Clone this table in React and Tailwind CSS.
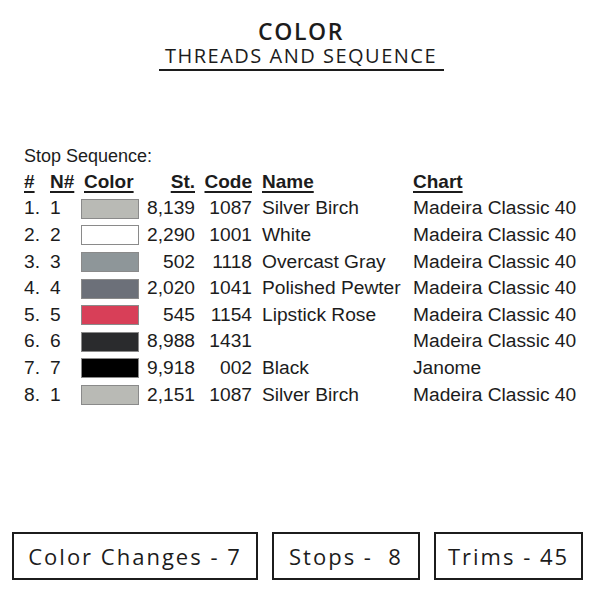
import React from "react";

const rows = [
  { n: "1.", k: "1", c: "#b9bab5", st: "8,139", code: "1087", name: "Silver Birch", chart: "Madeira Classic 40" },
  { n: "2.", k: "2", c: "#ffffff", st: "2,290", code: "1001", name: "White", chart: "Madeira Classic 40" },
  { n: "3.", k: "3", c: "#8e9699", st: "502", code: "1118", name: "Overcast Gray", chart: "Madeira Classic 40" },
  { n: "4.", k: "4", c: "#6c7079", st: "2,020", code: "1041", name: "Polished Pewter", chart: "Madeira Classic 40" },
  { n: "5.", k: "5", c: "#d83f58", st: "545", code: "1154", name: "Lipstick Rose", chart: "Madeira Classic 40" },
  { n: "6.", k: "6", c: "#2a2b2d", st: "8,988", code: "1431", name: "", chart: "Madeira Classic 40" },
  { n: "7.", k: "7", c: "#000000", st: "9,918", code: "002", name: "Black", chart: "Janome" },
  { n: "8.", k: "1", c: "#b9bab5", st: "2,151", code: "1087", name: "Silver Birch", chart: "Madeira Classic 40" },
];

const U = "underline underline-offset-[3px] decoration-2";

export default function App() {
  return (
    <div className="w-[600px] h-[600px] bg-white flex flex-col text-[#1c1c1c] overflow-hidden">
      <div className="flex flex-col items-center pt-[17px]" style={{ fontFamily: '"Open Sans", sans-serif' }}>
        <div className="text-[23px] leading-[28px] font-semibold tracking-[1.6px] pl-[2px]">COLOR</div>
        <div className="w-[285px] border-b-2 border-[#1c1c1c] ml-[2px] pb-[2px]">
          <div className="text-center text-[20px] leading-[22px] tracking-[1.5px]">THREADS AND SEQUENCE</div>
        </div>
      </div>

      <div className="flex flex-col pl-[24px] mt-[72px]" style={{ fontFamily: '"Liberation Sans", Arial, sans-serif' }}>
        <div className="text-[18px] leading-[26px]">Stop Sequence:</div>
        <div className="flex items-center h-[26.5px] text-[19px] font-bold">
          <div className="w-[26px]"><span className={U}>#</span></div>
          <div className="w-[34px]"><span className={U}>N#</span></div>
          <div className="w-[55px]"><span className={U}>Color</span></div>
          <div className="w-[56px] text-right"><span className={U}>St.</span></div>
          <div className="w-[57px] text-right"><span className={U}>Code</span></div>
          <div className="w-[161px] pl-[10px]"><span className={U}>Name</span></div>
          <div><span className={U}>Chart</span></div>
        </div>
        {rows.map((r, i) => (
          <div key={i} className="flex items-center h-[26.6px] text-[19.2px] whitespace-nowrap">
            <div className="w-[26px]">{r.n}</div>
            <div className="w-[31px]">{r.k}</div>
            <div className="w-[58px] flex items-center">
              <div className="w-[58px] h-[20px] border border-[#8a8a8a]" style={{ backgroundColor: r.c }} />
            </div>
            <div className="w-[56px] text-right">{r.st}</div>
            <div className="w-[57px] text-right">{r.code}</div>
            <div className="w-[161px] pl-[10px]">{r.name}</div>
            <div>{r.chart}</div>
          </div>
        ))}
      </div>

      <div className="mt-auto mb-[20px] flex pl-[12px] gap-[14px]" style={{ fontFamily: '"Open Sans", sans-serif' }}>
        <div className="w-[246px] h-[48px] border-2 border-[#1c1c1c] flex items-center justify-center text-[22px] font-medium tracking-[2px]">Color Changes - 7</div>
        <div className="w-[148px] h-[48px] border-2 border-[#1c1c1c] flex items-center justify-center text-[22px] font-medium tracking-[2px] whitespace-pre">Stops -  8</div>
        <div className="w-[149px] h-[48px] border-2 border-[#1c1c1c] flex items-center justify-center text-[22px] font-medium tracking-[2px]">Trims - 45</div>
      </div>
    </div>
  );
}
